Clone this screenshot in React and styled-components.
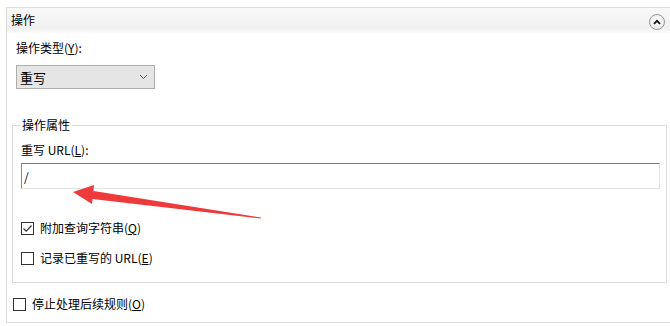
import React from "react";
import styled, { createGlobalStyle } from "styled-components";

const GlobalStyle = createGlobalStyle`
  html, body {
    margin: 0;
    padding: 0;
    background: #fff;
  }
  body {
    font-family: "Noto Sans CJK SC", "Noto Sans", sans-serif;
    font-size: 12px;
    color: #000;
  }
`;

const Page = styled.div`
  position: relative;
  width: 670px;
  height: 326px;
  padding-top: 7px;
  box-sizing: border-box;
  overflow: hidden;
`;

const Panel = styled.div`
  margin-left: 6px;
  border: 1px solid #dcdcdc;
  border-right: none;
  padding-bottom: 10px;
`;

const Header = styled.div`
  height: 25px;
  display: flex;
  align-items: center;
  justify-content: space-between;
  padding: 0 5px 0 4px;
  background: linear-gradient(to bottom, #f8f8f8, #f1f1f1 80%, #fbfbfb);
`;

const HeaderTitle = styled.span`
  line-height: 16px;
  margin-top: -1px;
`;

const CollapseButton = styled.span`
  width: 14px;
  height: 14px;
  margin-top: 3px;
  border-radius: 50%;
  border: 1px solid #9a9a9a;
  background: radial-gradient(circle at 50% 40%, #ffffff, #e4e4e4);
  display: flex;
  align-items: center;
  justify-content: center;
`;

const Body = styled.div`
  padding-left: 9px;
  display: flex;
  flex-direction: column;
  align-items: flex-start;
`;

const Label = styled.div`
  line-height: 16px;
  margin-top: ${(p) => p.$top}px;
  white-space: nowrap;
`;

const Key = styled.span`
  text-decoration: underline;
  text-underline-offset: 1px;
`;

const Select = styled.div`
  margin-top: 9px;
  width: 139px;
  height: 24px;
  box-sizing: border-box;
  border: 1px solid #adadad;
  background: #e5e5e5;
  display: flex;
  align-items: center;
  justify-content: space-between;
  padding: 0 6px 0 3px;
  font-size: 13px;
`;

const Group = styled.fieldset`
  margin: 28px 0 0 -4px;
  width: 655px;
  box-sizing: border-box;
  border: 1px solid #dcdcdc;
  padding: 0 6px 16px 8px;
  display: flex;
  flex-direction: column;
  align-items: stretch;
`;

const Legend = styled.legend`
  line-height: 16px;
  padding: 0 2px;
  margin-left: -1px;
`;

const TextInput = styled.div`
  margin-top: 5px;
  height: 26px;
  box-sizing: border-box;
  border: 1px solid #e3e3e3;
  border-top-color: #7a7a7a;
  border-left-color: #8a8a8a;
  padding-left: 2px;
  display: flex;
  align-items: center;
  font-size: 12px;
`;

const CheckRow = styled.div`
  display: flex;
  align-items: center;
  gap: 6px;
  height: 16px;
  line-height: 16px;
  margin-top: ${(p) => p.$top}px;
  margin-left: ${(p) => p.$left || 0}px;
  white-space: nowrap;
`;

const Box = styled.span`
  width: 13px;
  height: 13px;
  box-sizing: border-box;
  border: 1px solid #333;
  background: #fff;
  display: flex;
  align-items: center;
  justify-content: center;
`;

const ArrowLayer = styled.svg`
  position: absolute;
  left: 0;
  top: 0;
  pointer-events: none;
`;

const Checkbox = ({ checked, children, top, left }) => (
  <CheckRow $top={top} $left={left}>
    <Box>
      {checked && (
        <svg width="11" height="11" viewBox="0 0 11 11">
          <path d="M1.5 5.5 L4.2 8.2 L9.5 2.5" fill="none" stroke="#333" strokeWidth="1.2" />
        </svg>
      )}
    </Box>
    <span>{children}</span>
  </CheckRow>
);

export default function App() {
  return (
    <>
      <GlobalStyle />
      <Page>
        <Panel>
          <Header>
            <HeaderTitle>操作</HeaderTitle>
            <CollapseButton>
              <svg width="8" height="6" viewBox="0 0 8 6">
                <path d="M1 4.8 L4 1.8 L7 4.8" fill="none" stroke="#111" strokeWidth="1.8" />
              </svg>
            </CollapseButton>
          </Header>
          <Body>
            <Label $top={7}>
              操作类型(<Key>Y</Key>):
            </Label>
            <Select>
              <span>重写</span>
              <svg width="9" height="6" viewBox="0 0 9 6">
                <path d="M1 1 L4.5 4.5 L8 1" fill="none" stroke="#555" strokeWidth="1" />
              </svg>
            </Select>
            <Group>
              <Legend>操作属性</Legend>
              <Label $top={9}>
                重写 URL(<Key>L</Key>):
              </Label>
              <TextInput>/</TextInput>
              <Checkbox checked top={31}>
                附加查询字符串(<Key>Q</Key>)
              </Checkbox>
              <Checkbox top={14}>
                记录已重写的 URL(<Key>E</Key>)
              </Checkbox>
            </Group>
            <Checkbox top={13} left={-3}>
              停止处理后续规则(<Key>O</Key>)
            </Checkbox>
          </Body>
        </Panel>
        <ArrowLayer width="670" height="326" viewBox="0 0 670 326">
          <polygon
            points="73,192 94,185 93.5,191 261,217.5 261,218.5 92.5,199 92,204"
            fill="#ee3a3a"
          />
        </ArrowLayer>
      </Page>
    </>
  );
}
